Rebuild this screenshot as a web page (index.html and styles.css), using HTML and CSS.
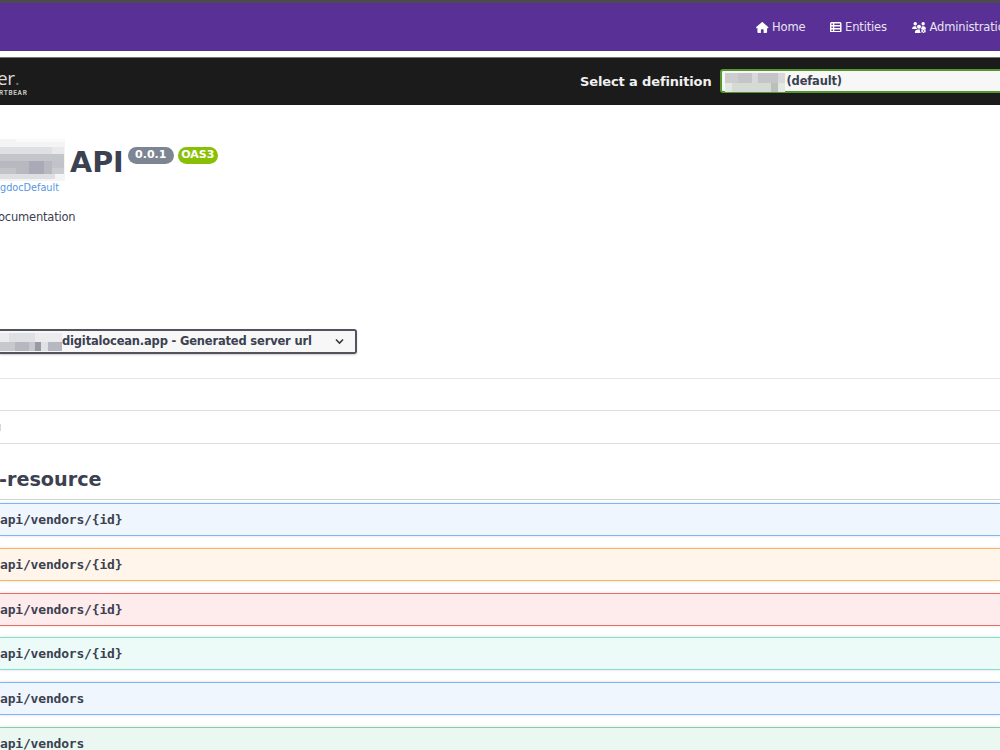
FILE: index.html
```html
<!DOCTYPE html>
<html lang="en">
<head>
<meta charset="utf-8">
<title>API</title>
<link rel="stylesheet" href="styles.css">
</head>
<body>
<nav class="navbar">
  <a class="nav-item home"><svg class="icon" viewBox="0 0 576 512"><path d="M576 256c0 18-14 32-32 32h-32l1 160c0 35-20 64-56 64h-105V368c0-18-14-32-32-32h-64c-18 0-32 14-32 32v144H120c-36 0-56-29-56-64V288H32c-18 0-32-14-32-32 0-9 3-17 10-24L266 8c14-11 30-11 43 0l255 224c8 7 12 15 12 24z"/></svg>Home</a>
  <a class="nav-item entities"><svg class="icon" viewBox="0 32 512 448" preserveAspectRatio="none"><path fill-rule="evenodd" d="M64 32h384q64 0 64 64v320q0 64-64 64H64q-64 0-64-64V96q0-64 64-64zm0 64v64h64V96zm128 0v64h256V96zM64 224v64h64v-64zm128 0v64h256v-64zM64 352v64h64v-64zm128 0v64h256v-64z"/></svg>Entities</a>
  <a class="nav-item admin"><svg class="icon" viewBox="0 0 640 512"><circle cx="144" cy="80" r="80"/><circle cx="512" cy="80" r="80"/><circle cx="320" cy="224" r="92"/><path d="M0 299c0-59 48-107 107-107h43c16 0 31 3 45 10-8 55 8 93 43 118H21c-12 0-21-9-21-21zM405 320c33-31 48-70 40-118 14-7 29-10 45-10h43c59 0 107 48 107 107 0 12-9 21-21 21zM128 485c0-73 60-133 133-133h105c-10 65 5 120 45 160H155c-15 0-27-12-27-27z"/><path fill-rule="evenodd" d="M505 310h45l10 29 25 11 30-12 25 37-20 26v25l20 27-25 37-30-12-25 13-10 21h-45l-9-22-23-12-29 12-25-37 20-27v-25l-20-26 25-37 29 12 23-11zm23 70a35 35 0 1 0 1 70 35 35 0 0 0-1-70z"/></svg>Administration</a>
</nav>
<header class="topbar">
  <div class="logo"><div class="logo-name">er<span>.</span></div><div class="logo-by">RTBEAR</div></div>
  <label class="label">Select a definition</label>
  <div class="definition"><svg class="mask" width="60" height="19" shape-rendering="crispEdges"><path fill="#cdcdd0" d="M0 0h60v10H0z"/><path fill="#c5c5c9" d="M13 0h14v10H13zM33 0h20v10H33z"/><path fill="#d8d8db" d="M27 0h6v10h-6zM53 0h7v10h-7z"/><path fill="#d5dbd3" d="M0 10h60v9H0z"/><path fill="#e2e9e0" d="M0 10h7v9H0zM53 10h7v9h-7z"/><path fill="#b9c0ba" d="M46 10h7v9h-7z"/></svg><span>(default)</span></div>
</header>
<main>
  <div class="title-row">
    <svg class="title-mask" width="65" height="42" shape-rendering="crispEdges"><path fill="#f4f4f5" d="M0 0h65v42H0z"/><path fill="#fafafa" d="M16 0h49v3H16z"/><path fill="#dfe0e3" d="M0 8h52v7H0z"/><path fill="#e9e9eb" d="M52 8h12v7H52z"/><path fill="#c4c5ca" d="M0 15h64v7H0z"/><path fill="#b7b9c0" d="M0 22h52v13H0z"/><path fill="#c2c3c9" d="M52 22h12v7H52zM0 29h16v6H0z"/><path fill="#cbccd1" d="M52 29h12v6H52z"/><path fill="#a8abb6" d="M29 22h15v13H29z"/><path fill="#dedfe2" d="M0 35h55v5H0z"/></svg>
    <h1>API</h1><span class="badge version">0.0.1</span><span class="badge oas">OAS3</span>
  </div>
  <a class="spec">gdocDefault</a>
  <p class="description">ocumentation</p>
  <div class="server"><svg class="server-mask" width="62" height="18" shape-rendering="crispEdges"><path fill="#dfe0e4" d="M0 0h35v9H0z"/><path fill="#ececee" d="M0 0h9v9H0zM35 0h27v9H35z"/><path fill="#c6c8ce" d="M0 9h35v9H0z"/><path fill="#b5b8c0" d="M15 9h14v9H15zM48 9h14v9H48z"/><path fill="#969ba6" d="M35 9h6v9h-6z"/><path fill="#dfe1e4" d="M41 9h7v9h-7z"/></svg><span>digitalocean.app - Generated server url</span><svg class="chevron" viewBox="0 0 20 20"><path d="M4.500 7 10 12.500 15.500 7"/></svg></div>
  <div class="divider"></div>
  <div class="filter"><i></i></div>
  <h2>-resource</h2>
  <section class="operations">
    <div class="op get">api/vendors/{id}</div>
    <div class="op put">api/vendors/{id}</div>
    <div class="op delete">api/vendors/{id}</div>
    <div class="op patch">api/vendors/{id}</div>
    <div class="op get">api/vendors</div>
    <div class="op post">api/vendors</div>
  </section>
</main>
</body>
</html>
```
FILE: styles.css
```css
* { box-sizing: border-box; }
html, body { height: 750px; overflow: hidden; }
body { margin: 0; background: #fff; color: #3b4151; font-family: "DejaVu Sans", sans-serif; }
svg { display: block; flex: none; }
.navbar { height: 51px; border-top: 3px solid #4b4a4e; background: #593196; display: flex; align-items: center; padding-left: 756px; overflow: hidden; }
.nav-item { display: flex; align-items: center; flex: none; color: #e9e3f2; font-size: 11.5px; letter-spacing: -.14px; height: 20px; }
.icon { fill: #fff; height: 11px; margin-right: 4px; }
.home .icon { width: 12.500px; margin-right: 3.500px; }
.home { width: 74px; }
.entities .icon { width: 11.500px; height: 10.500px; margin-right: 3.500px; }
.entities { width: 82px; }
.admin .icon { width: 14px; margin-right: 3.500px; }
.topbar { height: 48px; margin-top: 6px; border-top: 1px solid #747474; background: #1b1b1b; display: flex; align-items: center; overflow: hidden; }
.logo { width: 580px; flex: none; padding-top: 4px; }
.logo-name { color: #ddd; font: 19px/19px "Open Sans", sans-serif; margin-left: -3px; letter-spacing: -.3px; }
.logo-name span { color: #777; }
.logo-by { color: #c5c5c5; font: 700 6.500px/10px Roboto, sans-serif; letter-spacing: .7px; margin-left: -1px; }
.label { width: 139.500px; flex: none; color: #f0f0f0; font-size: 13px; letter-spacing: -.13px; font-weight: 700; }
.definition { width: 290px; height: 24px; flex: none; margin-bottom: 1px; border: 2px solid #55962f; border-radius: 3px; background: #f7f7f7; display: flex; align-items: center; gap: 2px; padding-left: 3px; font-size: 11.5px; letter-spacing: -.17px; font-weight: 700; }
.mask { margin-top: 2px; }
.title-row { height: 42px; margin-top: 35px; display: flex; }
.title-mask { margin-top: -1px; }
h1 { margin: 5px 4px 0 5px; font-size: 28.600px; line-height: 34px; }
.badge { margin-top: 7px; height: 16.500px; border-radius: 9px; color: #fff; font-size: 11px; line-height: 16px; font-weight: 700; text-align: center; }
.version { width: 46px; margin-right: 4px; background: #7d8492; }
.oas { width: 40px; background: #89bf04; }
.spec { display: block; height: 12px; font-size: 9.700px; line-height: 12px; color: #5797e0; }
.description { margin: 14px 0 0 -2px; font-size: 11.5px; letter-spacing: -.2px; line-height: 18px; }
.server { width: 357px; height: 25px; margin-top: 103px; border: 2px solid #51535f; border-left: 0; border-radius: 0 3px 3px 0; background: #f7f7f7; box-shadow: 0 1px 2px #0003; display: flex; align-items: center; font-size: 11.5px; letter-spacing: -.18px; font-weight: 700; }
.server span { width: 249px; white-space: nowrap; margin-top: -2px; }
.chevron { width: 13px; height: 13px; margin-left: 22px; fill: none; stroke: #30333c; stroke-width: 2.2; }
.divider { height: 1px; margin-top: 24px; background: #e5e5e6; }
.filter { height: 34px; margin-top: 31px; border: solid #d9dde5; border-width: 1px 0; display: flex; align-items: center; }
.filter i { width: 1px; height: 7px; background: #d7d7d9; }
h2 { margin: 22px 0 0 -1px; height: 34px; border-bottom: 1px solid #d0d1d3; font-size: 19.200px; line-height: 28px; }
.operations { padding-top: 3.400px; display: grid; grid-auto-rows: 33px; row-gap: 11.65px; }
.op { border: solid; border-width: 1px 0; box-shadow: 0 0 3px #0002; font: 700 13px/31px "DejaVu Sans Mono", monospace; letter-spacing: -.18px; }
.get { background: #eff6fe; border-color: #79b7f6; }
.put { background: #fff5ea; border-color: #fbb45c; }
.delete { background: #feebeb; border-color: #eb6b6b; }
.patch { background: #ecfbf8; border-color: #84dfcb; }
.post { background: #eaf8f1; border-color: #83cfaa; }
```
